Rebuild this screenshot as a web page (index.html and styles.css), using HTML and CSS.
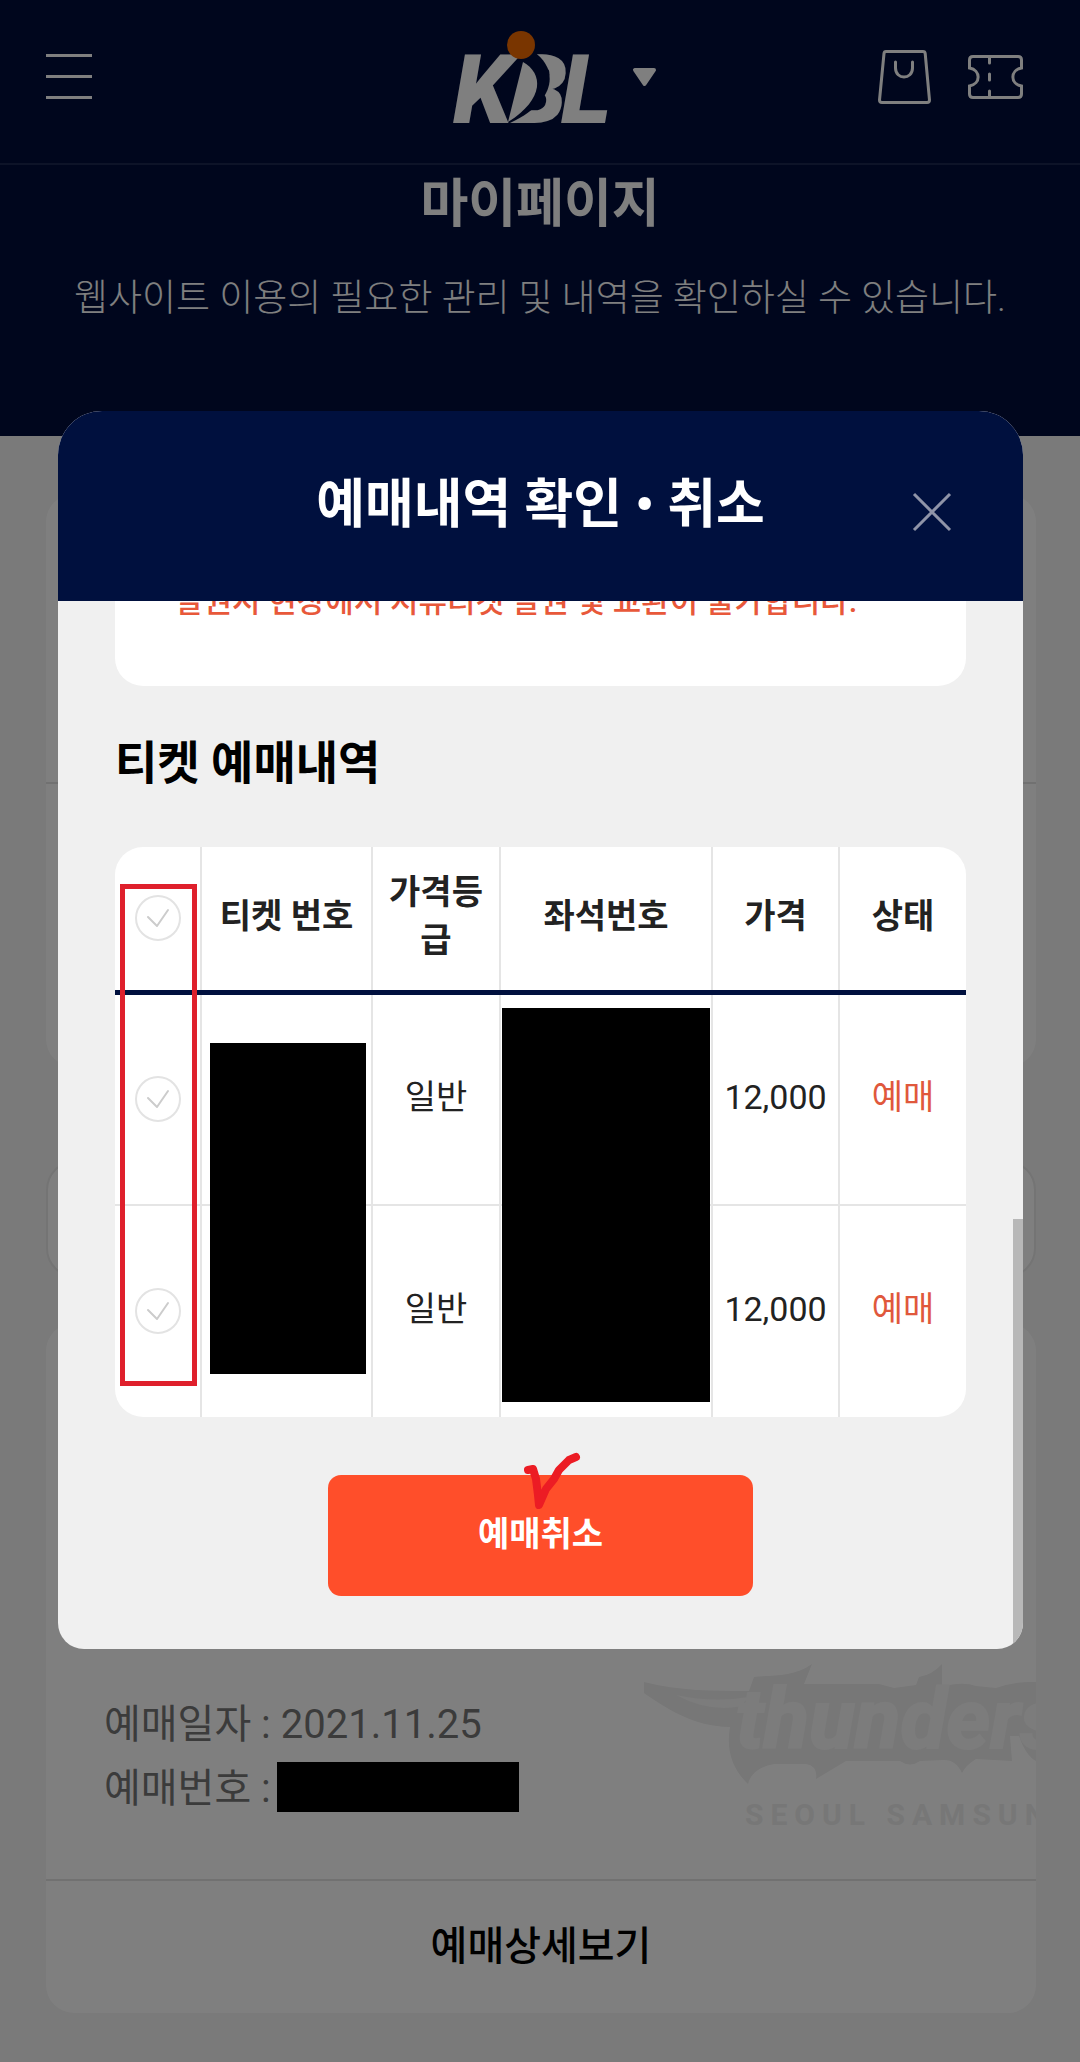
FILE: index.html
```html
<!DOCTYPE html>
<html lang="ko">

<head>
    <meta charset="UTF-8" />
    <meta name="viewport" content="width=device-width, initial-scale=1" />
    <title>KBL 마이페이지</title>
    <link rel="stylesheet" href="styles.css">
</head>

<body>
    <div class="page">
        <header class="site-header">
            <button class="menu-btn" type="button" aria-label="메뉴">
                <span></span><span></span><span></span>
            </button>
            <a class="logo" href="#" aria-label="KBL">
                <svg width="206" height="92" viewBox="0 0 206 92">
                    <text class="logo-text" x="54" y="92">B</text>
                    <path class="logo-gap" d="M50 20 L80 20 C106 38 104 70 57 92 H46 Z" />
                    <path class="logo-leaf" d="M70 31 C90 42 92 68 55 91 Z" />
                    <text class="logo-text" x="0 108" y="92">KL</text>
                    <circle cx="68" cy="14" r="14" fill="#f26a00" />
                    <path class="logo-arrow" d="M182 39 H201 L191.500 53 Z" />
                </svg>
            </a>
            <nav class="header-icons">
                <a href="#" aria-label="장바구니">
                    <svg width="54" height="56" viewBox="0 0 54 56">
                        <path d="M8 2.500 H45 Q47 2.500 47.200 4.500 L51.500 51 Q51.500 53.500 49 53.500 H4 Q1.500 53.500 1.500 51 L6 4.500 Q6.200 2.500 8 2.500 Z" />
                        <path d="M17.500 13 V19 C17.500 31 34.500 31 34.500 19 V13" />
                    </svg>
                </a>
                <a href="#" aria-label="티켓">
                    <svg width="56" height="46" viewBox="0 0 56 46">
                        <path d="M5 2.500 H50 Q53.500 2.500 53.500 6 V14 C42 16 42 30 53.500 32 V40 Q53.500 43.500 50 43.500 H5 Q1.500 43.500 1.500 40 V32 C13 30 13 16 1.500 14 V6 Q1.500 2.500 5 2.500 Z" />
                        <path d="M21.500 3 V9 M21.500 20 V26 M21.500 37 V43" />
                    </svg>
                </a>
            </nav>
        </header>

        <section class="hero">
            <h1>마이페이지</h1>
            <p>웹사이트 이용의 필요한 관리 및 내역을 확인하실 수 있습니다.</p>
        </section>

        <main class="content">
            <section class="card card-summary">
                <div class="card-body"></div>
                <div class="card-footer"></div>
            </section>

            <div class="filter-box"></div>

            <section class="card card-booking">
                <svg class="team-mark" width="392" height="190" viewBox="0 0 392 190" aria-hidden="true">
                    <path class="mark-dark" d="M0 31 C35 40 70 40 105 40 L110 26 C130 24 150 26 168 13 L160 33 H235 L250 37 L272 34 L275 26 Q288 24 298 13 V36 Q318 30 332 35 L352 37 Q372 30 392 31 V110 Q382 105 375 85 L366 85 L368 110 L332 108 Q322 114 318 122 Q312 109 300 109 L276 110 Q266 117 256 110 H202 L172 128 Q174 115 162 113 H130 Q108 117 104 133 Q80 110 86 76 C50 76 20 56 0 42 Z" />
                    <path class="mark-light" d="M32 44 Q70 52 104 46 L98 55 Q65 62 32 44 Z" />
                    <text class="mark-name" x="92" y="97">thunders</text>
                    <text class="mark-city" x="101" y="174">SEOUL SAMSUN</text>
                </svg>
                <div class="card-body booking-info">
                    <p>예매일자 : 2021.11.25</p>
                    <p>예매번호 : <span class="masked"></span></p>
                </div>
                <div class="card-footer">
                    <a href="#">예매상세보기</a>
                </div>
            </section>
        </main>
    </div>

    <!-- Reservation popup -->
    <div class="overlay">
        <div class="modal" role="dialog" aria-labelledby="modalTitle">
            <div class="modal-header">
                <h2 id="modalTitle">예매내역 확인 • 취소</h2>
                <button class="close-btn" type="button" aria-label="닫기">
                    <svg width="40" height="40" viewBox="0 0 40 40">
                        <path d="M2 2 L38 38 M38 2 L2 38" />
                    </svg>
                </button>
            </div>

            <div class="modal-body">
                <div class="notice">
                    <p>발권시 현장에서 지류티켓 발권 및 교환이 불가합니다.</p>
                </div>

                <h3>티켓 예매내역</h3>

                <div class="ticket-box">
                    <table class="ticket-table">
                        <colgroup>
                            <col class="col-check">
                            <col class="col-number">
                            <col class="col-grade">
                            <col class="col-seat">
                            <col class="col-price">
                            <col class="col-state">
                        </colgroup>
                        <thead>
                            <tr>
                                <th><input type="checkbox" aria-label="전체 선택"></th>
                                <th>티켓 번호</th>
                                <th>가격등급</th>
                                <th>좌석번호</th>
                                <th>가격</th>
                                <th>상태</th>
                            </tr>
                        </thead>
                        <tbody>
                            <tr>
                                <td><input type="checkbox" aria-label="첫 번째 티켓 선택"></td>
                                <td></td>
                                <td>일반</td>
                                <td></td>
                                <td>12,000</td>
                                <td class="state">예매</td>
                            </tr>
                            <tr>
                                <td><input type="checkbox" aria-label="두 번째 티켓 선택"></td>
                                <td></td>
                                <td>일반</td>
                                <td></td>
                                <td>12,000</td>
                                <td class="state">예매</td>
                            </tr>
                        </tbody>
                    </table>
                    <span class="mask mask-number"></span>
                    <span class="mask mask-seat"></span>
                    <span class="check-outline"></span>
                </div>

                <button class="cancel-btn" type="button">
                    예매취소
                    <svg class="red-tick" width="60" height="60" viewBox="0 0 60 60">
                        <path d="M6 18 L11 17 L14 27 L16 43 L17 53 L24 37 L32 27 L37 18 L47 8 L54 5" />
                    </svg>
                </button>
                <span class="scroll-thumb"></span>
            </div>
        </div>
    </div>
</body>

</html>
```
FILE: styles.css
```css
* {
    box-sizing: border-box;
}

body {
    margin: 0;
    font-family: Roboto, "Noto Sans CJK KR", sans-serif;
    background: #f4f4f4;
    color: #222;
}

h1,
h2,
h3,
p {
    margin: 0;
}

a {
    color: inherit;
    text-decoration: none;
}

button {
    font-family: inherit;
    padding: 0;
    border: none;
    background: none;
    cursor: pointer;
}

svg {
    display: block;
}

/* --- Header --- */
.site-header {
    display: grid;
    grid-template-columns: 1fr auto 1fr;
    align-items: center;
    height: 165px;
    padding: 0 56px 10px 46px;
    background: #000d3a;
    border-bottom: 2px solid #1a2650;
}

.menu-btn {
    display: flex;
    flex-direction: column;
    gap: 18px;
    width: 46px;
}

.menu-btn span {
    height: 3px;
    background: #fff;
}

.logo {
    margin-left: 42px;
}

.logo-text {
    font-family: Roboto, sans-serif;
    font-size: 96px;
    font-weight: 900;
    font-style: italic;
    fill: #fff;
}

.logo-gap {
    fill: #000d3a;
}

.logo-leaf {
    fill: #fff;
}

.logo-arrow {
    fill: #fff;
    stroke: #fff;
    stroke-width: 4;
    stroke-linejoin: round;
}

.header-icons {
    display: flex;
    justify-content: flex-end;
    align-items: center;
    gap: 36px;
}

.header-icons path {
    fill: none;
    stroke: #fff;
    stroke-width: 3;
    stroke-linecap: round;
}

/* --- Title area --- */
.hero {
    min-height: 271px;
    padding-top: 2px;
    background: #000d3a;
    color: #fff;
    text-align: center;
}

.hero h1 {
    font-size: 52px;
    line-height: 76px;
}

.hero p {
    margin-top: 28px;
    font-size: 37px;
    font-weight: 300;
    line-height: 56px;
}

/* --- Cards --- */
.content {
    padding: 58px 44px 49px 46px;
}

.card {
    position: relative;
    overflow: hidden;
    border-radius: 28px;
    background: #fff;
}

.card-footer {
    display: flex;
    align-items: center;
    justify-content: center;
    min-height: 134px;
    padding-bottom: 8px;
    border-top: 2px solid #e2e2e2;
    color: #000;
    font-size: 40px;
    font-weight: 500;
}

.card-summary .card-body {
    min-height: 288px;
}

.card-summary .card-footer {
    min-height: 285px;
}

.filter-box {
    height: 118px;
    margin: 93px 0 45px;
    border: 2px solid #e8e8e8;
    border-radius: 30px;
    background: #fff;
}

.booking-info {
    display: flex;
    flex-direction: column;
    justify-content: flex-end;
    min-height: 556px;
    padding: 58px;
    color: #777;
    font-size: 40px;
    line-height: 64px;
}

.booking-info p {
    display: flex;
    align-items: center;
    gap: 6px;
}

.masked {
    width: 242px;
    height: 50px;
    margin-bottom: 5px;
    background: #000;
}

.team-mark {
    position: absolute;
    right: 0;
    bottom: 172px;
}

.mark-dark {
    fill: #eee;
}

.mark-light {
    fill: #f8f8f8;
}

.mark-name,
.mark-city {
    font-family: Roboto, sans-serif;
    font-weight: bold;
}

.mark-name {
    font-size: 84px;
    font-style: italic;
    fill: #f8f8f8;
    stroke: #f8f8f8;
    stroke-width: 2;
}

.mark-city {
    font-size: 30px;
    letter-spacing: 7px;
    fill: #eee;
}

/* --- Popup --- */
.overlay {
    position: fixed;
    inset: 0;
    display: flex;
    align-items: center;
    justify-content: center;
    padding: 0 57px 2px 58px;
    background: rgba(0, 0, 0, 0.5);
}

.modal {
    display: flex;
    flex-direction: column;
    width: 100%;
    height: 60vh;
    overflow: hidden;
    border-radius: 44px 44px 26px 26px;
    background: #f0f0f0;
}

.modal-header {
    position: relative;
    flex: none;
    height: 190px;
    padding-top: 56px;
    background: #00103e;
    color: #fff;
    text-align: center;
}

.modal-header h2 {
    font-size: 53px;
    line-height: 76px;
}

.close-btn {
    position: absolute;
    top: 81px;
    right: 71px;
}

.close-btn path {
    fill: none;
    stroke: #8f94a8;
    stroke-width: 3;
}

/* scrolled down to the last row */
.modal-body {
    position: relative;
    flex: 1;
    display: flex;
    flex-direction: column;
    justify-content: flex-end;
    min-height: 0;
    overflow: hidden;
    padding: 0 57px 53px;
}

.modal-body > * {
    flex: none;
}

.notice {
    padding: 40px 60px 61px;
    border-radius: 28px;
    background: #fff;
    color: #e8583a;
    font-size: 31px;
    font-weight: 500;
    line-height: 46px;
}

.modal-body h3 {
    margin: 44px 0 51px;
    color: #000;
    font-size: 46px;
    line-height: 66px;
}

.ticket-box {
    position: relative;
    overflow: hidden;
    border-radius: 28px;
    background: #fff;
}

.ticket-table {
    width: 100%;
    table-layout: fixed;
    border-collapse: collapse;
    font-size: 34px;
    line-height: 48px;
    text-align: center;
}

.col-check {
    width: 86px;
}

.col-number {
    width: 171px;
}

.col-grade {
    width: 128px;
}

.col-seat {
    width: 212px;
}

.ticket-table th,
.ticket-table td {
    height: 212px;
    padding: 0 10px 4px;
    border-right: 2px solid #e5e5e5;
    word-break: break-all;
}

.ticket-table th {
    height: 146px;
    border-bottom: 5px solid #00103e;
}

.ticket-table tr:first-child td {
    border-bottom: 2px solid #e5e5e5;
}

.ticket-table th:last-child,
.ticket-table td:last-child {
    border-right: none;
}

.ticket-table td.state {
    color: #e0583c;
}

.ticket-table input {
    appearance: none;
    display: block;
    width: 46px;
    height: 46px;
    margin: 0 auto;
    border: 2px solid #e3e3e3;
    border-radius: 50%;
    background: #fff url("data:image/svg+xml,%3Csvg xmlns='http://www.w3.org/2000/svg' width='42' height='42' fill='none' stroke='%23ccc' stroke-width='2' stroke-linecap='round' stroke-linejoin='round'%3E%3Cpath d='M11 20l9 9 11-16'/%3E%3C/svg%3E") center no-repeat;
}

.ticket-table th:first-child,
.ticket-table td:first-child {
    padding: 0;
}

/* masked personal data */
.mask {
    position: absolute;
    background: #000;
}

.mask-number {
    top: 196px;
    left: 95px;
    width: 156px;
    height: 331px;
}

.mask-seat {
    top: 161px;
    left: 387px;
    width: 208px;
    height: 394px;
}

.check-outline {
    position: absolute;
    top: 37px;
    left: 5px;
    width: 77px;
    height: 502px;
    border: 5px solid #df202c;
    pointer-events: none;
}

.cancel-btn {
    position: relative;
    align-self: center;
    width: 50%;
    height: 121px;
    margin-top: 58px;
    padding-bottom: 8px;
    border-radius: 13px;
    background: #ff4e2a;
    color: #fff;
    font-size: 34px;
    font-weight: bold;
}

.red-tick {
    position: absolute;
    top: -23px;
    left: 194px;
}

.red-tick path {
    fill: none;
    stroke: #ec1c24;
    stroke-width: 8;
    stroke-linecap: round;
    stroke-linejoin: round;
}

.scroll-thumb {
    position: absolute;
    right: 0;
    bottom: 0;
    width: 10px;
    height: 41%;
    background: #b8b8b8;
}
```
